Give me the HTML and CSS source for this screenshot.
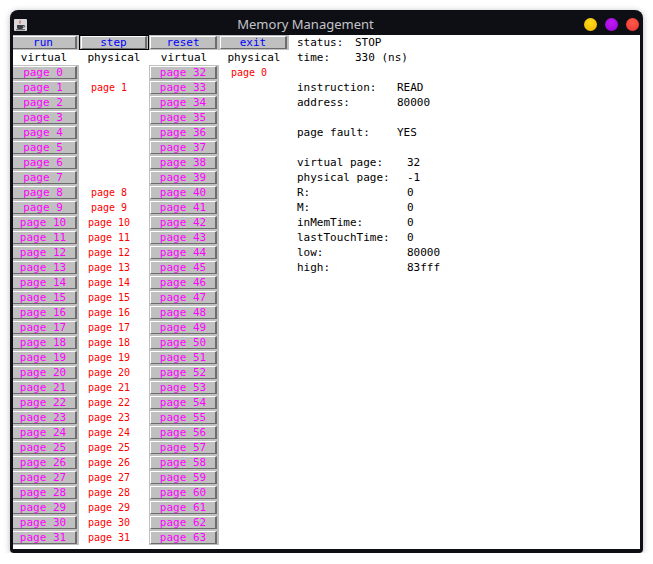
FILE: index.html
```html
<!DOCTYPE html>
<html>
<head>
<meta charset="utf-8">
<title>Memory Management</title>
<link rel="stylesheet" href="styles.css">
</head>
<body>
<div class="window">
  <div class="titlebar">
    <svg class="appicon" width="13" height="12" viewBox="0 0 13 12">
      <rect x="0" y="0" width="13" height="12" rx="1" fill="#d9d9d9"/>
      <path d="M6 1.5c1 1-1 1.6 0 3" stroke="#d02020" stroke-width="1" fill="none"/>
      <path d="M3 6h6v2.5c0 1-1 1.5-2 1.5H5c-1 0-2-.5-2-1.5z" fill="#3a3a44"/>
      <path d="M9 6.5h1.2c.8 0 .8 1.6 0 1.6H9" stroke="#3a3a44" stroke-width="0.9" fill="none"/>
      <rect x="2" y="10.3" width="9" height="0.9" fill="#3a3a44"/>
    </svg>
    <div class="title">Memory Management</div>
    <div class="dots">
      <span class="dot yellow"></span>
      <span class="dot purple"></span>
      <span class="dot red"></span>
    </div>
  </div>
  <div class="content">
    <div class="grid">
      <div class="cell"><div class="face ctl">run</div></div>
      <div class="cell focus"><div class="face ctl">step</div></div>
      <div class="cell"><div class="face ctl">reset</div></div>
      <div class="cell"><div class="face ctl">exit</div></div>

      <div class="head">virtual</div><div class="head">physical</div><div class="head">virtual</div><div class="head">physical</div>

      <div class="cell"><div class="face">page 0</div></div><div class="phys"></div><div class="cell"><div class="face">page 32</div></div><div class="phys">page 0</div>
      <div class="cell"><div class="face">page 1</div></div><div class="phys">page 1</div><div class="cell"><div class="face">page 33</div></div><div class="phys"></div>
      <div class="cell"><div class="face">page 2</div></div><div class="phys"></div><div class="cell"><div class="face">page 34</div></div><div class="phys"></div>
      <div class="cell"><div class="face">page 3</div></div><div class="phys"></div><div class="cell"><div class="face">page 35</div></div><div class="phys"></div>
      <div class="cell"><div class="face">page 4</div></div><div class="phys"></div><div class="cell"><div class="face">page 36</div></div><div class="phys"></div>
      <div class="cell"><div class="face">page 5</div></div><div class="phys"></div><div class="cell"><div class="face">page 37</div></div><div class="phys"></div>
      <div class="cell"><div class="face">page 6</div></div><div class="phys"></div><div class="cell"><div class="face">page 38</div></div><div class="phys"></div>
      <div class="cell"><div class="face">page 7</div></div><div class="phys"></div><div class="cell"><div class="face">page 39</div></div><div class="phys"></div>
      <div class="cell"><div class="face">page 8</div></div><div class="phys">page 8</div><div class="cell"><div class="face">page 40</div></div><div class="phys"></div>
      <div class="cell"><div class="face">page 9</div></div><div class="phys">page 9</div><div class="cell"><div class="face">page 41</div></div><div class="phys"></div>
      <div class="cell"><div class="face">page 10</div></div><div class="phys">page 10</div><div class="cell"><div class="face">page 42</div></div><div class="phys"></div>
      <div class="cell"><div class="face">page 11</div></div><div class="phys">page 11</div><div class="cell"><div class="face">page 43</div></div><div class="phys"></div>
      <div class="cell"><div class="face">page 12</div></div><div class="phys">page 12</div><div class="cell"><div class="face">page 44</div></div><div class="phys"></div>
      <div class="cell"><div class="face">page 13</div></div><div class="phys">page 13</div><div class="cell"><div class="face">page 45</div></div><div class="phys"></div>
      <div class="cell"><div class="face">page 14</div></div><div class="phys">page 14</div><div class="cell"><div class="face">page 46</div></div><div class="phys"></div>
      <div class="cell"><div class="face">page 15</div></div><div class="phys">page 15</div><div class="cell"><div class="face">page 47</div></div><div class="phys"></div>
      <div class="cell"><div class="face">page 16</div></div><div class="phys">page 16</div><div class="cell"><div class="face">page 48</div></div><div class="phys"></div>
      <div class="cell"><div class="face">page 17</div></div><div class="phys">page 17</div><div class="cell"><div class="face">page 49</div></div><div class="phys"></div>
      <div class="cell"><div class="face">page 18</div></div><div class="phys">page 18</div><div class="cell"><div class="face">page 50</div></div><div class="phys"></div>
      <div class="cell"><div class="face">page 19</div></div><div class="phys">page 19</div><div class="cell"><div class="face">page 51</div></div><div class="phys"></div>
      <div class="cell"><div class="face">page 20</div></div><div class="phys">page 20</div><div class="cell"><div class="face">page 52</div></div><div class="phys"></div>
      <div class="cell"><div class="face">page 21</div></div><div class="phys">page 21</div><div class="cell"><div class="face">page 53</div></div><div class="phys"></div>
      <div class="cell"><div class="face">page 22</div></div><div class="phys">page 22</div><div class="cell"><div class="face">page 54</div></div><div class="phys"></div>
      <div class="cell"><div class="face">page 23</div></div><div class="phys">page 23</div><div class="cell"><div class="face">page 55</div></div><div class="phys"></div>
      <div class="cell"><div class="face">page 24</div></div><div class="phys">page 24</div><div class="cell"><div class="face">page 56</div></div><div class="phys"></div>
      <div class="cell"><div class="face">page 25</div></div><div class="phys">page 25</div><div class="cell"><div class="face">page 57</div></div><div class="phys"></div>
      <div class="cell"><div class="face">page 26</div></div><div class="phys">page 26</div><div class="cell"><div class="face">page 58</div></div><div class="phys"></div>
      <div class="cell"><div class="face">page 27</div></div><div class="phys">page 27</div><div class="cell"><div class="face">page 59</div></div><div class="phys"></div>
      <div class="cell"><div class="face">page 28</div></div><div class="phys">page 28</div><div class="cell"><div class="face">page 60</div></div><div class="phys"></div>
      <div class="cell"><div class="face">page 29</div></div><div class="phys">page 29</div><div class="cell"><div class="face">page 61</div></div><div class="phys"></div>
      <div class="cell"><div class="face">page 30</div></div><div class="phys">page 30</div><div class="cell"><div class="face">page 62</div></div><div class="phys"></div>
      <div class="cell"><div class="face">page 31</div></div><div class="phys">page 31</div><div class="cell"><div class="face">page 63</div></div><div class="phys"></div>
    </div>
    <div class="status">
      <div class="group g1">
        <span>status:</span><span>STOP</span>
        <span>time:</span><span>330 (ns)</span>
      </div>
      <div class="gap"></div>
      <div class="group g2">
        <span>instruction:</span><span>READ</span>
        <span>address:</span><span>80000</span>
      </div>
      <div class="gap"></div>
      <div class="group g2">
        <span>page fault:</span><span>YES</span>
      </div>
      <div class="gap"></div>
      <div class="group g3">
        <span>virtual page:</span><span>32</span>
        <span>physical page:</span><span>-1</span>
        <span>R:</span><span>0</span>
        <span>M:</span><span>0</span>
        <span>inMemTime:</span><span>0</span>
        <span>lastTouchTime:</span><span>0</span>
        <span>low:</span><span>80000</span>
        <span>high:</span><span>83fff</span>
      </div>
    </div>
  </div>
</div>
</body>
</html>
```

FILE: styles.css
```css
html, body {
  margin: 0;
  padding: 0;
  background: #ffffff;
}

.window {
  margin: 10px 0 0 10px;
  width: 633px;
  height: 543px;
  background: #0e0f15;
  border-radius: 8px 8px 4px 4px;
  box-shadow: 0 1px 6px rgba(0, 0, 0, 0.28);
  display: flex;
  flex-direction: column;
  box-sizing: border-box;
}

.titlebar {
  height: 25px;
  display: flex;
  align-items: center;
  padding: 0 4px 0 4px;
  flex: none;
}

.appicon {
  flex: none;
  margin-top: 4px;
}

.title {
  flex: 1;
  text-align: center;
  font-family: "Noto Sans", "Open Sans", sans-serif;
  font-size: 13px;
  color: #c3c4c8;
  margin-top: 2px;
}

.dots {
  display: flex;
  gap: 8px;
  margin-top: 3px;
}

.dot {
  width: 13px;
  height: 13px;
  border-radius: 50%;
  display: block;
}

.dot.yellow { background: radial-gradient(circle at 50% 35%, #ffdc1a, #f0b400); }
.dot.purple { background: radial-gradient(circle at 50% 35%, #c01cf5, #9a00d6); }
.dot.red { background: radial-gradient(circle at 50% 35%, #ff5a4a, #ee3232); }

.content {
  flex: 1;
  margin: 0 3px 4px 3px;
  background: #ffffff;
  overflow: hidden;
  display: flex;
  align-items: flex-start;
}

.grid {
  margin-left: -4px;
  display: grid;
  grid-template-columns: repeat(4, 70px);
  grid-auto-rows: 15px;
  flex: none;
  font-family: "DejaVu Sans Mono", monospace;
  font-size: 11px;
}

.cell {
  background: #c0c0c0;
  padding: 1px 2px 1px 1px;
  box-sizing: border-box;
  height: 15px;
}

.cell.focus {
  outline: 1px solid #000;
  outline-offset: -1px;
  padding: 1px 2px 1px 2px;
}

.face {
  height: 13px;
  box-sizing: border-box;
  border-top: 1px solid #ffffff;
  border-left: 1px solid #ffffff;
  border-right: 2px solid #6c6c6c;
  border-bottom: 1px solid #6c6c6c;
  background: #c0c0c0;
  color: #ff00ff;
  text-align: center;
  line-height: 11px;
  white-space: pre;
}

.face.ctl {
  color: #0000ff;
}

.head {
  text-align: center;
  line-height: 15px;
  color: #000;
}

.phys {
  font-size: 10px;
  color: #ff0000;
  text-align: center;
  line-height: 15px;
  padding-right: 10px;
  white-space: pre;
}

.status {
  padding-left: 8px;
  font-family: "DejaVu Sans Mono", monospace;
  font-size: 11px;
  line-height: 15px;
  color: #000;
}

.group {
  display: grid;
}

.group span {
  white-space: pre;
}

.g1 { grid-template-columns: 58px auto; }
.g2 { grid-template-columns: 100px auto; }
.g3 { grid-template-columns: 110px auto; }

.gap {
  height: 15px;
}
```
